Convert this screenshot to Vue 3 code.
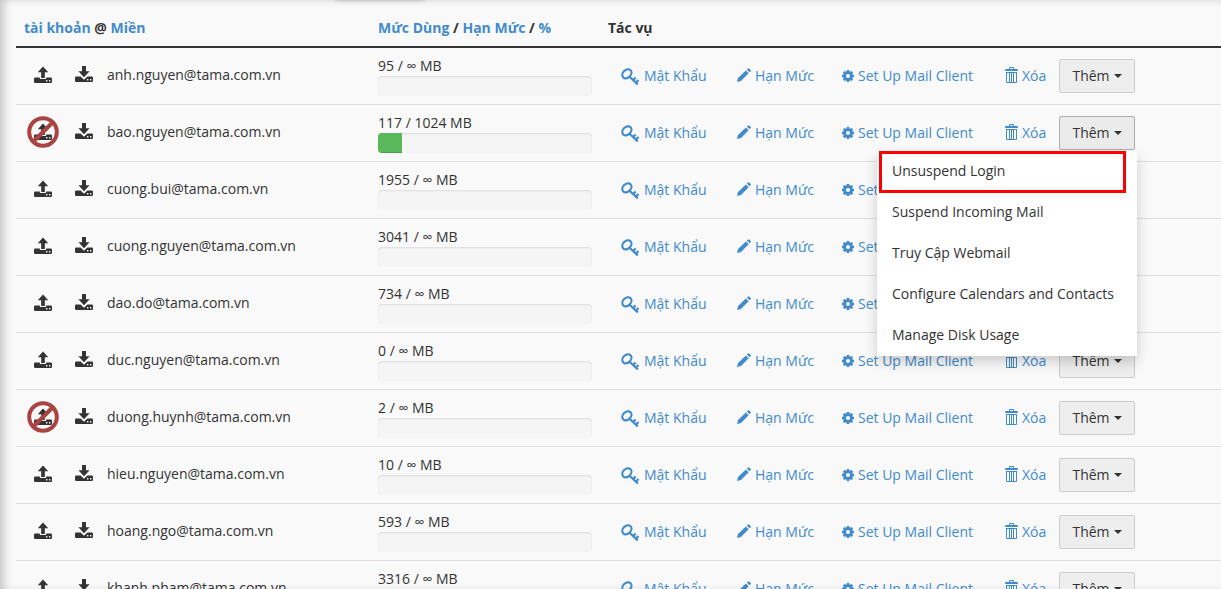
<template>
  <div class="page">
    <div class="tab-shadow"></div>
    <table class="accounts">
      <colgroup>
        <col class="col-account">
        <col class="col-usage">
        <col>
      </colgroup>
      <thead>
        <tr>
          <th><a href="#">tài khoản</a> @ <a href="#">Miền</a></th>
          <th><a href="#">Mức Dùng</a> / <a href="#">Hạn Mức</a> / <a href="#">%</a></th>
          <th>Tác vụ</th>
        </tr>
      </thead>
      <tbody>
        <tr v-for="account in accounts" :key="account.user">
          <td>
            <div class="account">
              <span class="status">
                <svg class="disk-icon" viewBox="0 0 18 18">
                  <path d="M9 .5l5.2 5.7h-3.4V12H7.2V6.2H3.8z" />
                  <path d="M1.2 11.5h4.6V12q0 .9.8.9h4.8q.8 0 .8-.9v-.5h4.6Q18 11.5 18 12.7v3.1q0 1.2-1.2 1.2H1.2Q0 17 0 15.8v-3.1q0-1.2 1.2-1.2zM12 14v1.4h1.4V14zm3 0v1.4h1.4V14z" fill-rule="evenodd" />
                </svg>
                <svg v-if="account.suspended" class="ban-icon" viewBox="0 0 32 32">
                  <circle cx="16" cy="16" r="13.8" />
                  <path d="M6.5 25.5l19-19" />
                </svg>
              </span>
              <span class="status">
                <svg class="disk-icon" viewBox="0 0 18 18">
                  <path d="M7 0h4v5.3h3.6L9 11.2 3.4 5.3H7z" />
                  <path d="M1.2 10.5h4.4L9 13.8l3.4-3.3h4.4q1.2 0 1.2 1.2v3.1q0 1.2-1.2 1.2H1.2Q0 16 0 14.8v-3.1q0-1.2 1.2-1.2zM12 13v1.4h1.4V13zm3 0v1.4h1.4V13z" fill-rule="evenodd" />
                </svg>
              </span>
              <span>{{ account.user }}@tama.com.vn</span>
            </div>
          </td>
          <td>
            <div>{{ account.used }} / {{ account.quota || '∞' }} MB</div>
            <div class="progress">
              <div class="progress-bar" :style="{ width: percent(account) + '%' }"></div>
            </div>
          </td>
          <td>
            <div class="actions">
              <a class="action" href="#">
                <svg class="key-icon" viewBox="0 0 19 22">
                  <ellipse cx="5.9" cy="8.8" rx="5.1" ry="3.9" transform="rotate(-45 5.9 8.8)" />
                  <path d="M8 11.2l8.8 8.2M12.6 14.8l2-2.2M15.3 17.3l2.2-2.3" />
                </svg>
                Mật Khẩu
              </a>
              <a class="action" href="#">
                <svg class="pencil-icon" viewBox="0 0 14 16">
                  <path d="M0 14l1-4 7.9-7.5 2.8 2.8L4 13zM9.8 1.6L11.1.4q.5-.5 1 0l1.6 1.6q.5.5 0 1l-1.2 1.3z" />
                </svg>
                Hạn Mức
              </a>
              <a class="action" href="#">
                <svg class="gear-icon" viewBox="0 0 12 12">
                  <path d="M4.8 0h2.4l.3 1.5.6.3 1.4-.9 1.6 1.6-.9 1.4.3.6 1.5.3v2.4l-1.5.3-.3.6.9 1.4-1.6 1.6-1.4-.9-.6.3-.3 1.5H4.8l-.3-1.5-.6-.3-1.4.9L.9 9.5l.9-1.4-.3-.6L0 7.2V4.8l1.5-.3.3-.6-.9-1.4L2.5.9l1.4.9.6-.3zM6 4a2 2 0 1 0 0 4 2 2 0 0 0 0-4z" fill-rule="evenodd" />
                </svg>
                Set Up Mail Client
              </a>
              <a class="action" href="#">
                <svg class="trash-icon" viewBox="0 0 13 18">
                  <path class="lid" d="M.5 2.5h12v1H.5z" />
                  <path d="M4.5 2V.5h4V2M1.5 5v10.5h10V5M1.5 5.5h10M4.5 5v10M6.5 5v10M8.5 5v10" />
                </svg>
                Xóa
              </a>
              <div class="dropdown">
                <button
                  type="button"
                  class="more"
                  :class="{ open: opened === account.user }"
                  @click="toggle(account.user)"
                >
                  Thêm <span class="caret"></span>
                </button>
                <ul v-if="opened === account.user" class="menu">
                  <li v-for="(item, index) in menuItems" :key="item">
                    <a href="#" :class="{ highlighted: index === 0 }">{{ item }}</a>
                  </li>
                </ul>
              </div>
            </div>
          </td>
        </tr>
      </tbody>
    </table>
  </div>
</template>

<script setup>
import { ref } from 'vue'

const accounts = [
  { user: 'anh.nguyen', used: 95 },
  { user: 'bao.nguyen', used: 117, quota: 1024, suspended: true },
  { user: 'cuong.bui', used: 1955 },
  { user: 'cuong.nguyen', used: 3041 },
  { user: 'dao.do', used: 734 },
  { user: 'duc.nguyen', used: 0 },
  { user: 'duong.huynh', used: 2, suspended: true },
  { user: 'hieu.nguyen', used: 10 },
  { user: 'hoang.ngo', used: 593 },
  { user: 'khanh.pham', used: 3316 }
]

const menuItems = [
  'Unsuspend Login',
  'Suspend Incoming Mail',
  'Truy Cập Webmail',
  'Configure Calendars and Contacts',
  'Manage Disk Usage'
]

const opened = ref('bao.nguyen')

const toggle = (user) => {
  opened.value = opened.value === user ? null : user
}

const percent = (account) => {
  if (!account.quota) return 0
  return (account.used / account.quota) * 100
}
</script>

<style>
body {
  margin: 0;
  background: #f9f9f9;
}
</style>

<style scoped>
.page {
  position: relative;
  box-sizing: border-box;
  height: 100vh;
  overflow: hidden;
  padding: 10px 0 0 16px;
  background: #f9f9f9;
  box-shadow: inset 6px 1px 8px -2px rgba(0, 0, 0, 0.2);
  color: #333;
  font-family: "Open Sans", "Noto Sans", sans-serif;
  font-size: 14px;
  line-height: 20px;
}

.tab-shadow {
  position: absolute;
  top: -10px;
  left: 335px;
  width: 90px;
  height: 10px;
  box-shadow: 0 0 4px rgba(0, 0, 0, 0.25);
}

a {
  color: #428bca;
  text-decoration: none;
}

.accounts {
  width: 100%;
  table-layout: fixed;
  border-collapse: separate;
  border-spacing: 0;
}

.col-account {
  width: 354px;
}

.col-usage {
  width: 230px;
}

th {
  padding: 8px;
  border-bottom: 2px solid #333;
  text-align: left;
  font-weight: 700;
}

td {
  box-sizing: border-box;
  height: 57px;
  padding: 8px;
  border-bottom: 1px solid #ddd;
  vertical-align: top;
}

.account {
  display: flex;
  align-items: center;
  height: 38px;
}

.status {
  position: relative;
  display: flex;
  justify-content: center;
  width: 38px;
  margin-right: 3px;
}

.status + span:last-child {
  margin-left: 1px;
}

.disk-icon {
  width: 18px;
  height: 18px;
  fill: #333;
}

.ban-icon {
  position: absolute;
  top: -7px;
  left: 3px;
  width: 32px;
  height: 32px;
  fill: none;
  stroke: #a94442;
  stroke-width: 4;
}

.progress {
  height: 20px;
  overflow: hidden;
  border-radius: 4px;
  background: #f5f5f5;
  box-shadow: inset 0 1px 2px rgba(0, 0, 0, 0.1);
}

.progress-bar {
  height: 100%;
  background: #5cb85c;
  box-shadow: inset 0 -1px 0 rgba(0, 0, 0, 0.15);
}

.actions {
  display: grid;
  grid-template-columns: 116px 105px 163px 67px auto;
  align-items: center;
  justify-content: start;
  height: 40px;
  white-space: nowrap;
}

.action {
  display: flex;
  align-items: center;
  gap: 4px;
  padding-left: 13px;
}

.key-icon {
  width: 19px;
  height: 22px;
  fill: none;
  stroke: #428bca;
  stroke-width: 2.2;
}

.pencil-icon {
  width: 14px;
  height: 16px;
  fill: #428bca;
}

.gear-icon {
  width: 12px;
  height: 12px;
  fill: #428bca;
}

.trash-icon {
  width: 13px;
  height: 18px;
  fill: none;
  stroke: #428bca;
}

.lid {
  fill: #a5c8e6;
}

.dropdown {
  position: relative;
}

.more {
  display: flex;
  align-items: center;
  justify-content: center;
  gap: 4px;
  min-width: 76px;
  height: 34px;
  padding: 0 12px;
  border: 1px solid #ccc;
  border-radius: 2px;
  background: #eee;
  color: #333;
  font: inherit;
}

.more.open {
  border-color: #adadad;
  background: #ebebeb;
}

.caret {
  border-top: 4px solid #333;
  border-right: 4px solid transparent;
  border-left: 4px solid transparent;
}

.menu {
  position: absolute;
  z-index: 10;
  top: 100%;
  right: -2px;
  width: 260px;
  margin: 1px 0 0;
  padding: 0;
  background: #fff;
  box-shadow: 0 6px 12px rgba(0, 0, 0, 0.18);
  list-style: none;
}

.menu a {
  display: block;
  box-sizing: border-box;
  height: 41px;
  padding: 10px 15px;
  color: #333;
}

.menu .highlighted {
  height: 42px;
  margin: 0 11px -1px 2px;
  padding: 7px 10px;
  border: 3px solid #f00;
}
</style>
